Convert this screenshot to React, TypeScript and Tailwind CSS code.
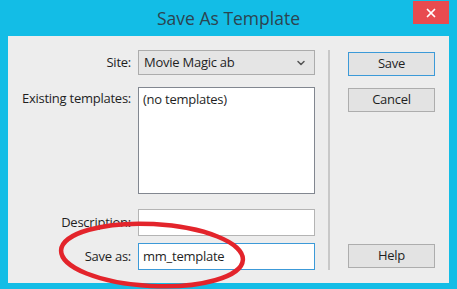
import { X, ChevronDown } from "lucide-react"

const font = { fontFamily: '"Open Sans", "Noto Sans", sans-serif' }

function Field({ label, children, className = "" }: { label: string; children: React.ReactNode; className?: string }) {
  return (
    <div className={`flex items-center ${className}`}>
      <span className="w-[124px] pr-[1px] text-right">{label}</span>
      <div className="ml-[6px]">{children}</div>
    </div>
  )
}

function Button({ label, primary = false, className = "" }: { label: string; primary?: boolean; className?: string }) {
  return (
    <div
      className={`flex h-[24px] w-[87px] items-center justify-center border bg-[#e3e3e3] ${
        primary ? "border-[#3c9ad8]" : "border-[#adadad]"
      } ${className}`}
    >
      {label}
    </div>
  )
}

export default function App() {
  return (
    <div
      className="relative h-[289px] w-[457px] overflow-hidden bg-[#13bde6] text-[13px] tracking-[-0.25px] text-[#1f1f1f]"
      style={font}
    >
      {/* title bar */}
      <div className="relative flex h-[36px] items-center justify-center">
        <span className="pt-[1px] text-[17.5px] tracking-normal text-[#2c4450]">Save As Template</span>
        <div className="absolute right-[8px] top-[1px] flex h-[23px] w-[36px] items-center justify-center bg-[#e84b4f]">
          <X className="h-[14px] w-[14px] text-white" strokeWidth={3} />
        </div>
      </div>

      {/* client area */}
      <div className="mx-[8px] flex h-[247px] bg-[#ededed]">
        <div className="w-[320px] pt-[14px]">
          <Field label="Site:">
            <div className="flex h-[25px] w-[177px] items-center justify-between border border-[#acacac] bg-[#e5e5e5] pl-[5px] pr-[7px]">
              <span>Movie Magic ab</span>
              <ChevronDown className="h-[12px] w-[12px] text-[#555]" strokeWidth={3} />
            </div>
          </Field>
          <div className="mt-[12px] flex items-start">
            <span className="w-[124px] pr-[1px] pt-[2px] text-right">Existing templates:</span>
            <div className="ml-[6px] h-[107px] w-[177px] border border-[#828790] bg-white pl-[4px] pt-[2px]">
              (no templates)
            </div>
          </div>
          <Field label="Description:" className="mt-[15px]">
            <div className="h-[27px] w-[177px] border border-[#b4b4b4] bg-white" />
          </Field>
          <Field label="Save as:" className="mt-[7px]">
            <div className="flex h-[27px] w-[177px] items-center border border-[#3c9ad8] bg-white pl-[4px]">
              mm_template
            </div>
          </Field>
        </div>

        <div className="mt-[14px] h-[220px] w-[2px] bg-[#c8c8c8]" />

        <div className="ml-[18px] flex flex-col pt-[16px]">
          <Button label="Save" primary />
          <Button label="Cancel" className="mt-[12px]" />
          <Button label="Help" className="mt-[132px]" />
        </div>
      </div>

      {/* red annotation ellipse */}
      <svg className="absolute left-0 top-0" width="457" height="289" viewBox="0 0 457 289">
        <ellipse
          cx="152"
          cy="255"
          rx="91"
          ry="31"
          fill="none"
          stroke="#e3242b"
          strokeWidth="4.5"
          transform="rotate(3 152 255)"
        />
      </svg>
    </div>
  )
}
